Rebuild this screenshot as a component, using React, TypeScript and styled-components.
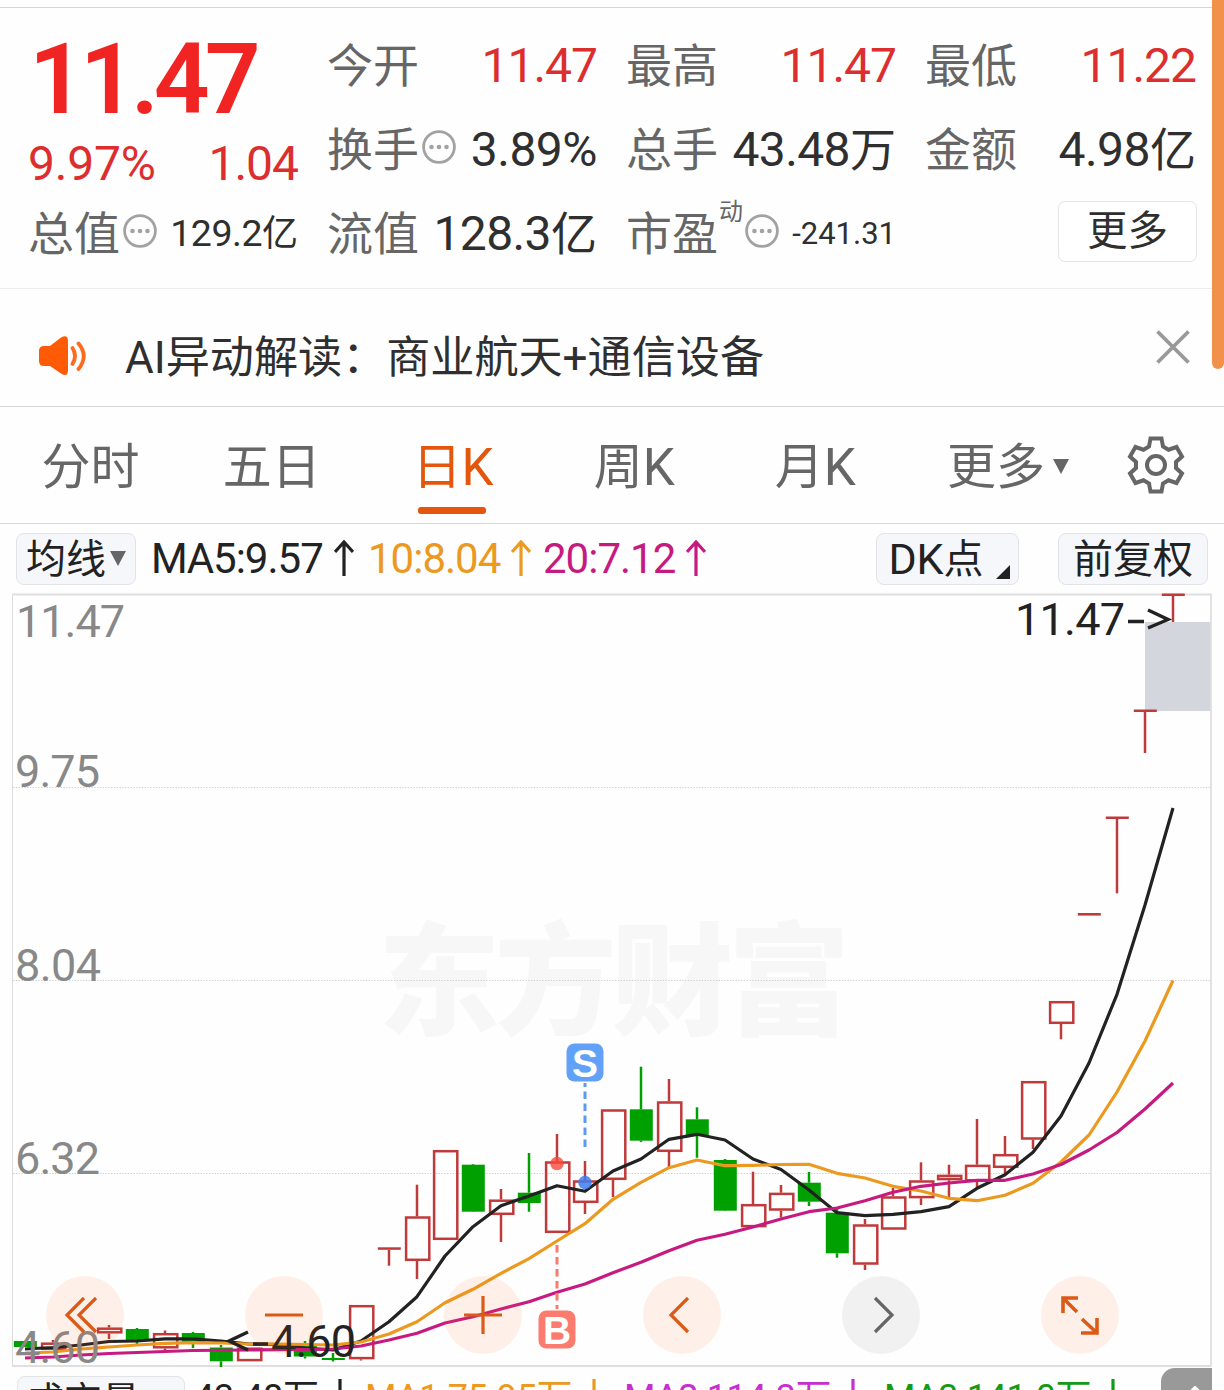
import React from "react";
import styled, { createGlobalStyle } from "styled-components";

const GlobalStyle = createGlobalStyle`
  * { box-sizing: border-box; }
  body { margin: 0; background: #fff; }
`;

const FONT = `Roboto, "Noto Sans CJK SC", sans-serif`;

const Page = styled.main`
  position: relative;
  width: 1224px;
  height: 1390px;
  overflow: hidden;
  background: #fefefe;
  font-family: ${FONT};
  font-kerning: none;
  color: #2f2f2f;
  display: flex;
  flex-direction: column;
  white-space: nowrap;
`;

const ScrollThumb = styled.div`
  position: absolute;
  top: 0;
  right: 0;
  width: 12px;
  height: 369px;
  background: #f2914a;
  border-radius: 0 0 6px 6px;
`;

const Num = styled.span<{ $size: number; $color?: string; $ls?: number; $weight?: number }>`
  font-size: ${(p) => p.$size}px;
  line-height: 1;
  letter-spacing: ${(p) => p.$ls ?? 0}px;
  font-weight: ${(p) => p.$weight ?? 400};
  color: ${(p) => p.$color ?? "inherit"};
`;

const Unit = styled.span<{ $size: number }>`
  font-size: ${(p) => p.$size}px;
  line-height: 1;
  letter-spacing: 0;
`;

/* ---------- quote header ---------- */

const Quote = styled.section`
  margin-top: 7px;
  height: 282px;
  flex: none;
  border-top: 1px solid #d6d6d6;
  border-bottom: 1px solid #ececec;
  padding: 15px 28px 0 29px;
  display: grid;
  grid-template-columns: 269px 269px 269px 270px;
  grid-template-rows: repeat(3, 84px);
  column-gap: 30px;
`;

const PriceBlock = styled.div`
  grid-row: span 2;
  display: flex;
  flex-direction: column;
`;

const Price = styled.div`
  height: 115px;
  padding: 8px 0 0 0;
`;

const Change = styled.div`
  display: flex;
  justify-content: space-between;
  align-items: center;
  height: 52px;
  margin-left: -1px;
`;

const Cell = styled.div`
  display: flex;
  align-items: center;
  justify-content: space-between;
  padding-top: 1px;
`;

const Label = styled.span`
  display: flex;
  align-items: center;
  gap: 3px;
  margin: 1px 0 0 -1px;
  font-size: 46px;
  line-height: 66px;
  color: #666;
`;

const Sup = styled.sup`
  font-size: 24px;
  line-height: 24px;
  align-self: flex-start;
  margin: -1px -1px 0 -2px;
`;

const MoreButton = styled.button`
  justify-self: end;
  align-self: center;
  width: 139px;
  height: 61px;
  margin: 0 -1px 3px 0;
  padding: 0 0 1px;
  border: 1.5px solid #e4e4e4;
  border-radius: 7px;
  background: #fff;
  font: 40.5px/1 ${FONT};
  color: #2f2f2f;
`;

const InfoSvg = styled.svg`
  margin-bottom: 6px;
`;

const InfoIcon = () => (
  <InfoSvg width="34" height="34" viewBox="0 0 34 34" fill="none">
    <circle cx="17" cy="17" r="15.4" stroke="#a2a2a2" strokeWidth="2.8" />
    {[9.5, 17, 24.5].map((x) => (
      <circle key={x} cx={x} cy="17" r="2.3" fill="#a2a2a2" />
    ))}
  </InfoSvg>
);

/* ---------- notice ---------- */

const Notice = styled.section`
  height: 118px;
  flex: none;
  border-bottom: 1px solid #d6d6d6;
  padding: 0 34px 0 38px;
  display: flex;
  align-items: center;
`;

const SpeakerIcon = styled.svg`
  margin-top: 16px;
`;

const NoticeText = styled.p`
  margin: 20px 0 0 37px;
  flex: 1;
  font-size: 44.1px;
  line-height: 60px;
`;

const CloseIcon = styled.svg`
  margin-bottom: 2px;
`;

/* ---------- period tabs ---------- */

const Tabs = styled.nav`
  height: 117px;
  flex: none;
  border-bottom: 1px solid #d6d6d6;
  display: flex;
`;

const Tab = styled.button<{ $active?: boolean; $menu?: boolean }>`
  position: relative;
  width: 181.2px;
  height: 116px;
  padding: 5px 0 0 ${(p) => (p.$menu ? 23 : 0)}px;
  border: 0;
  background: none;
  font: 49px/1 ${FONT};
  font-kerning: none;
  color: ${(p) => (p.$active ? "#e3560b" : "#666")};
  display: flex;
  align-items: center;
  justify-content: center;
  &::after {
    content: "";
    display: ${(p) => (p.$active ? "block" : "none")};
    position: absolute;
    left: 56px;
    bottom: 9px;
    width: 68px;
    height: 7px;
    border-radius: 3px;
    background: #e3560b;
  }
`;

const Caret = styled.i<{ $gap: number }>`
  width: 0;
  height: 0;
  margin: 0 0 3px ${(p) => p.$gap}px;
  border: solid transparent;
  border-width: 15px 8.5px 0;
  border-top-color: #666;
`;

const GearButton = styled.button`
  flex: 1;
  padding: 0;
  border: 0;
  background: none;
  display: flex;
  align-items: center;
  justify-content: center;
`;

/* ---------- indicator bars ---------- */

const Bar = styled.div`
  height: 66px;
  flex: none;
  padding: 9px 16px 0;
  display: flex;
  align-items: flex-start;
`;

const Chip = styled.button<{ $w: number; $ml?: number; $left?: boolean }>`
  width: ${(p) => p.$w}px;
  height: 52px;
  margin-left: ${(p) => p.$ml ?? 0}px;
  flex: none;
  padding: ${(p) => (p.$left ? "0 0 2px 8px" : "1px 0 0")};
  display: flex;
  align-items: center;
  justify-content: ${(p) => (p.$left ? "flex-start" : "center")};
  border: 1.5px solid #e1e3e7;
  border-radius: 8px;
  background: #f6f7fa;
  font: ${(p) => (p.$left ? 38 : 40)}px/1 ${FONT};
  color: #222;
`;

const Corner = styled.i`
  width: 0;
  height: 0;
  border: solid transparent;
  border-color: transparent transparent #222 transparent;
  border-width: 0 0 14px 14px;
  align-self: flex-end;
  margin: 0 -3px 5px 12px;
`;

const Reading = styled.span<{ $color: string; $w: number; $small?: boolean }>`
  width: ${(p) => p.$w}px;
  height: ${(p) => (p.$small ? 36 : 52)}px;
  flex: none;
  display: flex;
  align-items: center;
  color: ${(p) => p.$color};
  font-size: ${(p) => (p.$small ? 36 : 42)}px;
  letter-spacing: ${(p) => (p.$small ? -0.3 : -1)}px;
  line-height: ${(p) => (p.$small ? 36 : 52)}px;
`;

const Readings = styled.div`
  flex: 1;
  display: flex;
  padding-left: 15px;
`;

const ArrowSvg = styled.svg`
  margin: 0 0 2px 11px;
`;

const Arrow = ({ down }: { down?: boolean }) => (
  <ArrowSvg width="20" height="36" viewBox="0 0 20 36" fill="none" stroke="currentColor" strokeWidth="3.2">
    <path d={down ? "M10 0V34M1 24L10 34L19 24" : "M10 36V2M1 12L10 2L19 12"} />
  </ArrowSvg>
);

const VolumeBar = styled(Bar)`
  height: 20px;
  padding: 6px 12px 0 17px;
`;

const VolumeReadings = styled(Readings)`
  padding: 4px 0 0 9px;
`;

const Expand = styled.div`
  width: 51px;
  height: 60px;
  margin-top: -8px;
  flex: none;
  border-radius: 14px 0 0 0;
  background: #999;
  display: flex;
  justify-content: center;
  padding: 18px 0 0 16px;
`;

/* ---------- chart ---------- */

const ChartBox = styled.section`
  position: relative;
  height: 780px;
  flex: none;
`;

const ChartSvg = styled.svg`
  display: block;
  font-family: ${FONT};
`;

const Controls = styled.div`
  position: absolute;
  left: 46px;
  bottom: 16px;
  display: flex;
  gap: 121px;
`;

const Round = styled.button<{ $muted?: boolean }>`
  width: 78px;
  height: 78px;
  padding: 0;
  border: 0;
  border-radius: 50%;
  background: ${(p) => (p.$muted ? "rgba(110,110,110,0.09)" : "rgba(255,100,20,0.09)")};
  display: flex;
  align-items: center;
  justify-content: center;
  color: ${(p) => (p.$muted ? "#666" : "#dc5a17")};
`;

type Candle = [x: number, up: boolean, top: number, bottom: number, high: number, low: number];

const candles: Candle[] = [
  [25, false, 1341, 1347, 1341, 1347],
  [53, true, 1342.5, 1350, 1340, 1350],
  [109, true, 1327.5, 1333.5, 1325, 1339],
  [137, false, 1329, 1341, 1328, 1344],
  [165, true, 1333, 1348.5, 1330.5, 1350],
  [193, false, 1333, 1342, 1332, 1348],
  [221, false, 1347.5, 1361.3, 1345, 1367],
  [249, true, 1347.5, 1361.3, 1347.5, 1361],
  [305, false, 1344, 1356.5, 1341, 1358.5],
  [333, false, 1358, 1360, 1353, 1361.5],
  [361, true, 1305, 1359.3, 1305, 1360.5],
  [389, true, 1247.3, 1249.8, 1248, 1265.7],
  [417, true, 1216.3, 1261, 1184.7, 1279],
  [445, true, 1150, 1240, 1150, 1240],
  [473, false, 1164.7, 1211.7, 1164, 1212],
  [501, true, 1199.5, 1215, 1189, 1242],
  [529, false, 1192.7, 1203, 1153, 1211.7],
  [557, true, 1161.3, 1233, 1134, 1233],
  [585, true, 1180.3, 1203, 1161, 1214],
  [613, true, 1109.3, 1180, 1109.3, 1197],
  [641, false, 1109.3, 1140.7, 1066.7, 1142],
  [669, true, 1101.3, 1152, 1079, 1167.7],
  [697, false, 1119.3, 1135, 1107.3, 1157.7],
  [725, false, 1160, 1210.7, 1159, 1211],
  [753, true, 1204, 1227.3, 1171.7, 1227],
  [781, true, 1192.7, 1210.7, 1185, 1217.5],
  [809, false, 1182.7, 1201.7, 1172, 1206],
  [837, false, 1212.7, 1253.3, 1208, 1257.7],
  [865, true, 1224.3, 1264.7, 1219, 1270],
  [893, true, 1196.3, 1229.7, 1188, 1229.7],
  [921, true, 1180.3, 1198.3, 1162.3, 1205],
  [949, true, 1174.7, 1180.3, 1164.7, 1197],
  [977, true, 1164.7, 1181.5, 1119, 1188],
  [1005, true, 1154, 1168, 1136, 1173],
  [1033, true, 1081, 1139.7, 1081, 1149],
  [1061, true, 1001, 1024, 1001, 1039.3],
  [1089, true, 913, 915.6, 913, 915],
  [1117, true, 816.5, 819, 817, 893.3],
  [1145, true, 709.5, 712, 710, 753],
  [1173, true, 593.5, 596, 595, 622],
];

const RED = "#bf3a3a";
const GREEN = "#00a000";

const CandleMark = ({ c: [x, up, top, bottom, high, low] }: { c: Candle }) => {
  const color = up ? RED : GREEN;
  const flat = bottom - top < 4;
  return (
    <g stroke={color} strokeWidth="2.5" fill="none">
      {high < top && <path d={`M${x} ${high}V${top}`} />}
      {low > bottom && <path d={`M${x} ${bottom}V${low}`} />}
      {!up || flat ? (
        <rect x={x - 11.2} y={top} width="23" height={bottom - top} fill={color} stroke="none" />
      ) : (
        <rect x={x - 10.9} y={top + 1.2} width="23.2" height={bottom - top - 2.4} />
      )}
    </g>
  );
};

const ma5 = "25,1349 53,1347.5 81,1345 109,1341.5 137,1341 165,1338.8 193,1338.8 221,1341 249,1344 277,1344.5 305,1348 333,1350 361,1341 389,1321.7 417,1296.7 445,1256 473,1226.7 501,1205.7 529,1196 557,1185.7 585,1191.3 613,1171 641,1159 669,1139.3 697,1134.3 725,1140 753,1159 781,1169.5 809,1190 837,1212.7 865,1215.7 893,1214.3 921,1211.7 949,1206.7 977,1188.3 1005,1174.7 1033,1152.3 1061,1116 1089,1063 1117,994.3 1145,905 1173,808";
const ma10 = "25,1353 53,1352 81,1349 109,1347 137,1345 165,1343.3 193,1342.7 221,1343 249,1344 277,1344 305,1344.5 333,1345 361,1342 389,1334 417,1321.7 445,1302.7 473,1289.3 501,1273.3 529,1258.7 557,1241 585,1223.7 613,1199.3 641,1182.3 669,1167.7 697,1160 725,1165.7 753,1165.3 781,1164.5 809,1164.3 837,1173.3 865,1178 893,1186.3 921,1191 949,1198.3 977,1200.7 1005,1195.3 1033,1183.3 1061,1162 1089,1135 1117,1092 1145,1041 1173,980.5";
const ma20 = "25,1358 53,1357 81,1355 109,1353.5 137,1352.5 193,1350.5 249,1350 305,1349.5 333,1349 361,1346 389,1340 417,1333.3 445,1323 473,1316.7 501,1309 529,1301.7 557,1292.3 585,1284 613,1272.7 641,1262.3 669,1250.7 697,1240.3 725,1234.3 753,1227 781,1219 809,1211.7 837,1208 865,1200.7 893,1192.3 921,1186.3 949,1183 977,1180.3 1005,1180.3 1033,1174 1061,1164.5 1089,1150 1117,1132.5 1145,1109 1173,1083";

const axis: [string, number, number, number][] = [
  ["11.47", 16, 637, 109],
  ["9.75", 15, 787, 85],
  ["8.04", 15, 981, 86],
  ["6.32", 15, 1174, 85],
  ["4.60", 15, 1363, 85],
];

const Chart = () => (
  <ChartSvg width="1224" height="780" viewBox="0 590 1224 780">
    <text x="378" y="1025" fontSize="122" fontWeight="900" fill="#f7f7f7" textLength="472" fontFamily='"Noto Sans CJK SC", sans-serif'>
      东方财富
    </text>
    <g stroke="#cfcfcf" strokeWidth="1" strokeDasharray="1.4 1.4">
      <path d="M13 787.5H1211M13 980.5H1211M13 1173.5H1211" />
    </g>
    <rect x="1145" y="622" width="66" height="89" fill="#d3d6dc" />
    <path d="M12.5 594.5V1366" stroke="#dcdcdc" />
    <path d="M12 594.5H1211V1366H12" fill="none" stroke="#dfdfdf" strokeWidth="1.8" />
    {candles.map((c) => (
      <CandleMark key={c[0]} c={c} />
    ))}
    <g fill="none" strokeWidth="3.2" strokeLinejoin="round">
      <polyline points={ma5} stroke="#222" />
      <polyline points={ma10} stroke="#eb991f" />
      <polyline points={ma20} stroke="#c71a80" />
    </g>
    <path d="M585 1083V1148" stroke="#5b9bee" strokeWidth="3" strokeDasharray="7.5 4.5" strokeDashoffset="3.5" />
    <path d="M557 1245V1309" stroke="#f57b6c" strokeWidth="3" strokeDasharray="7.5 4.5" />
    <circle cx="557" cy="1163.5" r="6.8" fill="#f9493a" fillOpacity="0.8" />
    <circle cx="585" cy="1182.5" r="6.8" fill="#3d7df0" fillOpacity="0.85" />
    <rect x="566.5" y="1043.5" width="37" height="38" rx="8" fill="#62a1f8" />
    <rect x="538.5" y="1310.5" width="37" height="38" rx="8" fill="#fb7c6e" />
    <g fontFamily='"Liberation Sans", Arial, sans-serif' fontSize="39" fontWeight="700" fill="#fff" textAnchor="middle">
      <text x="585" y="1076.5">S</text>
      <text x="557" y="1343.5">B</text>
    </g>
    <g fontSize="45" fill="#888">
      {axis.map(([t, x, y, w]) => (
        <text key={t} x={x} y={y} textLength={w}>{t}</text>
      ))}
    </g>
    <g fontSize="45" fill="#222">
      <text x="1015" y="635" textLength="110">11.47</text>
      <path d="M1128 621.5H1144M1148 610L1168 619.5L1148 628M248 1332L229 1341L248 1350M253 1344H268" fill="none" stroke="#222" strokeWidth="3.4" />
      <text x="271" y="1357" textLength="85">4.60</text>
    </g>
  </ChartSvg>
);

const icon = { width: 46, height: 46, viewBox: "0 0 46 46", fill: "none", stroke: "currentColor", strokeWidth: 3.2 };

export default function App() {
  return (
    <>
      <GlobalStyle />
      <Page>
        <Quote>
          <PriceBlock>
            <Price>
              <Num $size={98} $color="#f12424" $ls={-5} $weight={600}>11.47</Num>
            </Price>
            <Change>
              <Num $size={48} $color="#dc2e2e" $ls={-0.2}>9.97%</Num>
              <Num $size={48} $color="#dc2e2e" $ls={-1}>1.04</Num>
            </Change>
          </PriceBlock>
          <Cell>
            <Label>今开</Label>
            <Num $size={48} $color="#dc2e2e" $ls={-1}>11.47</Num>
          </Cell>
          <Cell>
            <Label>最高</Label>
            <Num $size={48} $color="#dc2e2e" $ls={-1}>11.47</Num>
          </Cell>
          <Cell>
            <Label>最低</Label>
            <Num $size={48} $color="#dc2e2e" $ls={-1}>11.22</Num>
          </Cell>
          <Cell>
            <Label>换手<InfoIcon /></Label>
            <Num $size={48} $ls={-0.5}>3.89%</Num>
          </Cell>
          <Cell>
            <Label>总手</Label>
            <Num $size={48} $ls={-0.6}>43.48<Unit $size={46}>万</Unit></Num>
          </Cell>
          <Cell>
            <Label>金额</Label>
            <Num $size={48} $ls={-0.5}>4.98<Unit $size={46}>亿</Unit></Num>
          </Cell>
          <Cell>
            <Label>总值<InfoIcon /></Label>
            <Num $size={37.5} $ls={-0.5}>129.2<Unit $size={36}>亿</Unit></Num>
          </Cell>
          <Cell>
            <Label>流值</Label>
            <Num $size={48} $ls={-0.6}>128.3<Unit $size={46}>亿</Unit></Num>
          </Cell>
          <Cell>
            <Label>市盈<Sup>动</Sup><InfoIcon /></Label>
            <Num $size={31}>-241.31</Num>
          </Cell>
          <MoreButton>更多</MoreButton>
        </Quote>

        <Notice>
          <SpeakerIcon width="50" height="42" viewBox="0 0 50 42" fill="none">
            <path d="M1 16Q1 11 6 11H12L23 2.5Q30 -1 30 6V35Q30 43 23 38.500L12 31H6Q1 31 1 26Z" fill="#ff5a05" />
            <path d="M34.500 13Q39.500 21 34.500 29M40.500 8.500Q51 21 40.500 34" stroke="#ff6a1f" strokeWidth="3.8" strokeLinecap="round" />
          </SpeakerIcon>
          <NoticeText>AI异动解读：商业航天+通信设备</NoticeText>
          <CloseIcon width="34" height="34" viewBox="0 0 34 34" stroke="#999" strokeWidth="3.8">
            <path d="M1.500 1.500L32.500 32.500M32.500 1.500L1.500 32.500" />
          </CloseIcon>
        </Notice>

        <Tabs>
          <Tab>分时</Tab>
          <Tab>五日</Tab>
          <Tab $active>日<Num $size={51}>K</Num></Tab>
          <Tab>周<Num $size={51}>K</Num></Tab>
          <Tab>月<Num $size={51}>K</Num></Tab>
          <Tab $menu>更多<Caret $gap={8} /></Tab>
          <GearButton>
            <svg width="60" height="60" viewBox="0 0 60 60" fill="none" stroke="#666" strokeWidth="4">
              <path d="M24.500 3.500H35.500L37 11.500L42.500 14.700L50.500 12L56 21.500L50 27V33L56 38.500L50.500 48L42.500 45.300L37 48.500L35.500 56.500H24.500L23 48.500L17.500 45.300L9.500 48L4 38.500L10 33V27L4 21.500L9.500 12L17.500 14.700L23 11.500Z" />
              <circle cx="30" cy="30" r="9" />
            </svg>
          </GearButton>
        </Tabs>

        <Bar>
          <Chip $w={120}>均线<Caret $gap={4} /></Chip>
          <Readings>
            <Reading $color="#222" $w={217}>MA5:9.57<Arrow /></Reading>
            <Reading $color="#eb991f" $w={175}>10:8.04<Arrow /></Reading>
            <Reading $color="#c71a80" $w={180}>20:7.12<Arrow /></Reading>
          </Readings>
          <Chip $w={143}><Num $size={43}>DK</Num>点<Corner /></Chip>
          <Chip $w={150} $ml={39}>前复权</Chip>
        </Bar>

        <ChartBox>
          <Chart />
          <Controls>
            <Round><svg {...icon}><path d="M22 6L5 23L22 40M34 6L17 23L34 40" /></svg></Round>
            <Round><svg {...icon}><path d="M4 23H42" /></svg></Round>
            <Round><svg {...icon}><path d="M4 23H42M23 4V42" /></svg></Round>
            <Round><svg {...icon}><path d="M29 6L12 23L29 40" /></svg></Round>
            <Round $muted><svg {...icon}><path d="M17 6L34 23L17 40" /></svg></Round>
            <Round>
              <svg {...icon} strokeWidth={3.6}><path d="M6 21V6H21M6 6L20 20M40 26V41H24M40 41L25 27" /></svg>
            </Round>
          </Controls>
        </ChartBox>

        <VolumeBar>
          <Chip $w={168} $left>成交量<Caret $gap={8} /></Chip>
          <VolumeReadings>
            <Reading $small $color="#222" $w={171}>43.48<Unit $size={36}>万</Unit><Arrow down /></Reading>
            <Reading $small $color="#eb991f" $w={259}>MA1:75.95<Unit $size={36}>万</Unit><Arrow down /></Reading>
            <Reading $small $color="#c530cf" $w={260}>MA2:114.3<Unit $size={36}>万</Unit><Arrow down /></Reading>
            <Reading $small $color="#159a15" $w={250}>MA3:141.0<Unit $size={36}>万</Unit><Arrow down /></Reading>
          </VolumeReadings>
          <Expand>
            <svg width="24" height="24" viewBox="0 0 24 24" fill="none" stroke="#fff" strokeWidth="5" strokeLinecap="round">
              <path d="M3 12L12 3L21 12" />
            </svg>
          </Expand>
        </VolumeBar>
        <ScrollThumb />
      </Page>
    </>
  );
}
